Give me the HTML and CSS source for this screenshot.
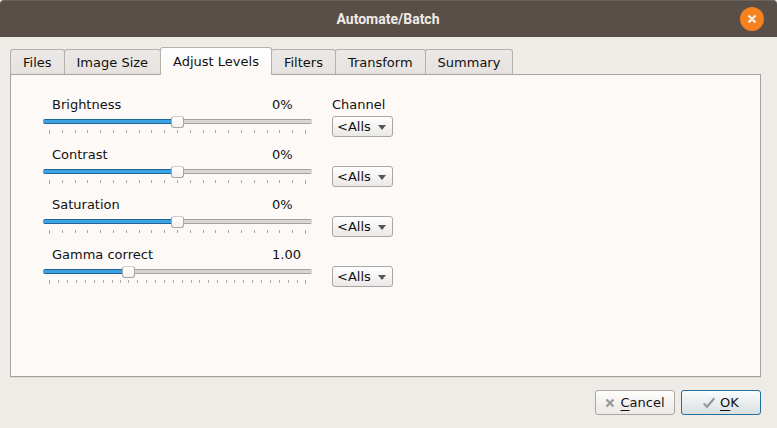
FILE: index.html
```html
<!DOCTYPE html>
<html lang="en">
<head>
<meta charset="utf-8">
<title>Automate/Batch</title>
<link rel="stylesheet" href="styles.css">
</head>
<body>
<svg class="defs" width="0" height="0" aria-hidden="true">
  <defs>
    <path id="ticks-20" d="M0 0h1v4h-1zM13 0h1v3h-1zM26 0h1v3h-1zM38 0h1v3h-1zM51 0h1v3h-1zM64 0h1v3h-1zM77 0h1v3h-1zM90 0h1v3h-1zM102 0h1v3h-1zM115 0h1v3h-1zM128 0h1v3h-1zM141 0h1v3h-1zM154 0h1v3h-1zM166 0h1v3h-1zM179 0h1v3h-1zM192 0h1v3h-1zM205 0h1v3h-1zM218 0h1v3h-1zM230 0h1v3h-1zM243 0h1v3h-1zM256 0h1v4h-1z"/>
    <path id="ticks-29" d="M0 0h1v4h-1zM9 0h1v3h-1zM18 0h1v3h-1zM27 0h1v3h-1zM36 0h1v3h-1zM45 0h1v3h-1zM54 0h1v3h-1zM63 0h1v3h-1zM71 0h1v3h-1zM79 0h1v3h-1zM88 0h1v3h-1zM97 0h1v3h-1zM106 0h1v3h-1zM115 0h1v3h-1zM124 0h1v3h-1zM133 0h1v3h-1zM142 0h1v3h-1zM150 0h1v3h-1zM159 0h1v3h-1zM168 0h1v3h-1zM177 0h1v3h-1zM185 0h1v3h-1zM194 0h1v3h-1zM203 0h1v3h-1zM212 0h1v3h-1zM221 0h1v3h-1zM230 0h1v3h-1zM239 0h1v3h-1zM248 0h1v3h-1zM256 0h1v4h-1z"/>
  </defs>
</svg>
<header class="titlebar">
  <h1 class="title">Automate/Batch</h1>
  <button class="close" type="button" aria-label="Close">
    <svg width="24" height="24" viewBox="0 0 24 24"><path d="M8.5 8.5l7 7M15.5 8.5l-7 7" stroke="#f6efe8" stroke-width="2.3" fill="none"/></svg>
  </button>
</header>
<main class="dialog">
  <div class="tabs" role="tablist">
    <button class="tab" type="button" role="tab">Files</button>
    <button class="tab" type="button" role="tab">Image Size</button>
    <button class="tab tab-active" type="button" role="tab" aria-selected="true">Adjust Levels</button>
    <button class="tab" type="button" role="tab">Filters</button>
    <button class="tab" type="button" role="tab">Transform</button>
    <button class="tab" type="button" role="tab">Summary</button>
  </div>
  <section class="panel" role="tabpanel">
    <div class="row">
      <div class="level">
        <div class="caption"><label for="brightness">Brightness</label><output for="brightness">0%</output></div>
        <input class="slider" id="brightness" type="range" min="-100" max="100" value="0" style="--fill:50%">
        <svg class="ticks" width="257" height="4"><use href="#ticks-20"/></svg>
      </div>
      <div class="channel">
        <label class="channel-label" for="ch1">Channel</label>
        <span class="combo"><select id="ch1"><option>&lt;Alls</option></select></span>
      </div>
    </div>
    <div class="row">
      <div class="level">
        <div class="caption"><label for="contrast">Contrast</label><output for="contrast">0%</output></div>
        <input class="slider" id="contrast" type="range" min="-100" max="100" value="0" style="--fill:50%">
        <svg class="ticks" width="257" height="4"><use href="#ticks-20"/></svg>
      </div>
      <div class="channel">
        <span class="combo"><select aria-labelledby="contrast"><option>&lt;Alls</option></select></span>
      </div>
    </div>
    <div class="row">
      <div class="level">
        <div class="caption"><label for="saturation">Saturation</label><output for="saturation">0%</output></div>
        <input class="slider" id="saturation" type="range" min="-100" max="100" value="0" style="--fill:50%">
        <svg class="ticks" width="257" height="4"><use href="#ticks-20"/></svg>
      </div>
      <div class="channel">
        <span class="combo"><select aria-labelledby="saturation"><option>&lt;Alls</option></select></span>
      </div>
    </div>
    <div class="row">
      <div class="level">
        <div class="caption"><label for="gamma">Gamma correct</label><output for="gamma">1.00</output></div>
        <input class="slider" id="gamma" type="range" min="10" max="300" value="100" style="--fill:32%">
        <svg class="ticks" width="257" height="4"><use href="#ticks-29"/></svg>
      </div>
      <div class="channel">
        <span class="combo"><select aria-labelledby="gamma"><option>&lt;Alls</option></select></span>
      </div>
    </div>
  </section>
  <footer class="actions">
    <button class="button" type="button">
      <svg width="10" height="10" viewBox="0 0 10 10"><path d="M1.5 1.5l7 7M8.5 1.5l-7 7" stroke="#9a9a9a" stroke-width="2.4" fill="none"/></svg>
      <span><u>C</u>ancel</span>
    </button>
    <button class="button button-default" type="button">
      <svg width="12" height="12" viewBox="0 0 12 12"><path d="M.7 6.5l3.3 3.3L11.3 1.3" stroke="#949a9c" stroke-width="2.2" fill="none"/></svg>
      <span><u>O</u>K</span>
    </button>
  </footer>
</main>
</body>
</html>
```
FILE: styles.css
```css
* {
  box-sizing: border-box;
}

body {
  margin: 0;
  min-height: 100vh;
  display: flex;
  flex-direction: column;
  background: #efebe7;
  color: #111;
  font: 13px/15px "DejaVu Sans", sans-serif;
}

button,
select {
  margin: 0;
  font: inherit;
  color: inherit;
}

.defs {
  position: absolute;
}

.titlebar {
  display: grid;
  grid-template-columns: 1fr auto 1fr;
  align-items: center;
  height: 37px;
  padding: 0 13px 0 12px;
  background: #584f49;
  border-top: 1px solid #6b625d;
  border-radius: 4px 4px 0 0;
}

.title {
  grid-column: 2;
  margin: 0;
  color: #f0ebe6;
  font: bold 14px/18px Roboto, sans-serif;
}

.close {
  justify-self: end;
  width: 24px;
  height: 24px;
  padding: 0;
  border: 0;
  border-radius: 50%;
  background: #f6811f;
}

.close svg {
  display: block;
}

.dialog {
  flex: 1;
  display: flex;
  flex-direction: column;
  padding: 10px 16px 13px 10px;
}

.tabs {
  display: flex;
  align-items: flex-end;
  margin-bottom: -1px;
}

.tab {
  height: 26px;
  margin-right: -1px;
  padding: 0 12px;
  border: 1px solid #b4b0ad;
  border-bottom-color: #a5a2a0;
  border-radius: 3px 3px 0 0;
  background: linear-gradient(#ebe8e5, #e6e2df);
}

.tab-active {
  z-index: 1;
  height: 28px;
  border-bottom: 0;
  background: linear-gradient(#fff, #fdf9f6);
}

.panel {
  flex: 1;
  display: flex;
  flex-direction: column;
  gap: 10px;
  padding: 22px 32px;
  border: 1px solid #a5a2a0;
  background: #fdf9f6;
  box-shadow: 0 1px #dfdbd7;
}

.row {
  display: flex;
  gap: 20px;
}

.level {
  width: 269px;
}

.caption {
  display: flex;
  justify-content: space-between;
  padding-left: 9px;
}

.caption output {
  width: 40px;
}

.slider {
  display: block;
  appearance: none;
  width: 100%;
  height: 11px;
  margin: 4px 0 3px;
  background: none;
}

.slider::-webkit-slider-runnable-track {
  height: 5px;
  border-radius: 2px;
  background:
    linear-gradient(#1f6598 1px, #3da2e2 1px 4px, #1f6598 4px) 0 0 / var(--fill) 100% no-repeat,
    linear-gradient(#a5a19e 1px, #d9d6d2 1px 4px, #a5a19e 4px);
}

.slider::-webkit-slider-thumb {
  appearance: none;
  width: 13px;
  height: 12px;
  margin-top: -3px;
  border: 1px solid #aaa7a4;
  border-top-color: #d0cdca;
  border-radius: 3px;
  background: linear-gradient(#fff, #f3f2f1);
}

.ticks {
  display: block;
  margin-left: 6px;
  fill: #aaa7a4;
}

.channel {
  display: flex;
  flex-direction: column;
  justify-content: flex-end;
  align-items: flex-start;
  gap: 4px;
  min-height: 40px;
}

.combo {
  position: relative;
  display: block;
}

.combo::after {
  content: "";
  position: absolute;
  top: 9px;
  right: 7px;
  border: 4px solid transparent;
  border-top: 5px solid #555;
  border-bottom: 0;
  pointer-events: none;
}

.combo select {
  display: block;
  appearance: none;
  width: 61px;
  height: 21px;
  padding: 0 4px;
  border: 1px solid #aaa6a3;
  border-radius: 3px;
  background: linear-gradient(#fff, #ebe9e7);
}

.actions {
  display: flex;
  justify-content: flex-end;
  gap: 6px;
  margin-top: 13px;
}

.button {
  display: flex;
  align-items: center;
  justify-content: center;
  gap: 5px;
  width: 80px;
  height: 25px;
  padding: 0;
  border: 1px solid #aaa6a3;
  border-radius: 3px;
  background: linear-gradient(#fdfdfc, #ebe8e6);
}

.button u {
  text-underline-offset: 3px;
}

.button-default {
  border-color: #236f9e;
  background: linear-gradient(#fafcfc, #d9dfe2);
}
```
